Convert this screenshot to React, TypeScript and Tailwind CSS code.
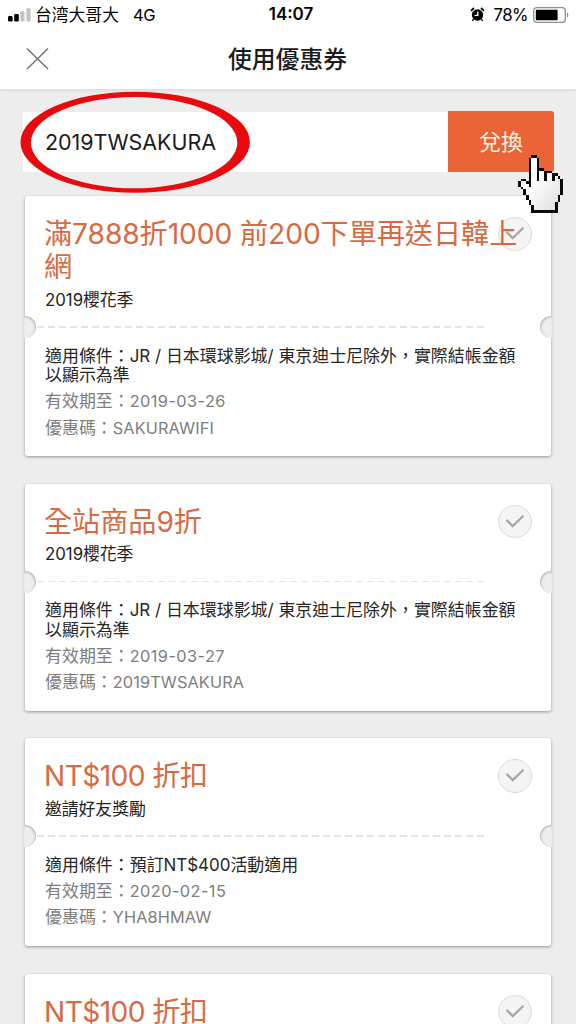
import { useState } from "react";
import clsx from "clsx";

interface Coupon {
  id: number;
  title: string[];
  campaign?: string;
  terms?: string[];
  expires?: string;
  code?: string;
}

const coupons: Coupon[] = [
  {
    id: 1,
    title: ["滿7888折1000 前200下單再送日韓上", "網"],
    campaign: "2019櫻花季",
    terms: ["適用條件：JR / 日本環球影城/ 東京迪士尼除外，實際結帳金額", "以顯示為準"],
    expires: "2019-03-26",
    code: "SAKURAWIFI",
  },
  {
    id: 2,
    title: ["全站商品9折"],
    campaign: "2019櫻花季",
    terms: ["適用條件：JR / 日本環球影城/ 東京迪士尼除外，實際結帳金額", "以顯示為準"],
    expires: "2019-03-27",
    code: "2019TWSAKURA",
  },
  {
    id: 3,
    title: ["NT$100 折扣"],
    campaign: "邀請好友獎勵",
    terms: ["適用條件：預訂NT$400活動適用"],
    expires: "2020-02-15",
    code: "YHA8HMAW",
  },
  // details not loaded yet
  { id: 4, title: ["NT$100 折扣"] },
];

// X = outline, o = fill
const HAND = [
  ".....XX..........",
  "....XooX.........",
  "....XooX.........",
  "....XooX.........",
  "....XooX.........",
  "....XooXXX.......",
  "....XooXooXXX....",
  "....XooXooXooXX..",
  "....XooXooXooXoX.",
  ".XX.XooXooXooXooX",
  "XooXXoooooooooooX",
  "XoooXoooooooooooX",
  ".XooooooooooooooX",
  "..XoooooooooooooX",
  "..XoooooooooooooX",
  "...XoooooooooooX.",
  "...XoooooooooooX.",
  "....XooooooooooX.",
  "....XoooooooooX..",
  ".....XooooooooX..",
  ".....XooooooooX..",
  ".....XXXXXXXXXX..",
];

const cells = (mark: string) =>
  HAND.map((row, y) =>
    row
      .split("")
      .map((c, x) => (c === mark ? `M${x} ${y}h1v1h-1z` : ""))
      .join("")
  ).join("");

// ── Pointer ──
const HandPointer = () => (
  <svg
    viewBox="0 0 17 22"
    preserveAspectRatio="none"
    shapeRendering="crispEdges"
    className="absolute left-[70px] top-[44px] z-20 h-[58px] w-[45px]"
  >
    <defs>
      <linearGradient id="hand" x1="0" y1="0" x2="1" y2="1">
        <stop offset="0.4" stopColor="#fff" />
        <stop offset="1" stopColor="#dcdcdc" />
      </linearGradient>
    </defs>
    <path d={cells("o")} fill="url(#hand)" />
    <path d={cells("X")} fill="#0b0b0b" />
  </svg>
);

// ── Status bar ──
const StatusBar = () => (
  <div className="grid h-7 grid-cols-3 items-center pl-2 pr-[7px] pt-px text-black">
    <div className="flex items-center">
      <svg width="23" height="14" viewBox="0 0 23 14">
        <rect x="0" y="8" width="4.6" height="5.5" rx="1.2" />
        <rect x="6.2" y="6" width="4.6" height="7.5" rx="1.2" />
        <rect x="12.3" y="3.2" width="4.2" height="10.3" rx="1" fill="#c4c4c4" />
        <rect x="18.4" y="0.3" width="4.2" height="13.2" rx="1" fill="#c4c4c4" />
      </svg>
      <span className="ml-[4px] mt-[2px] whitespace-nowrap text-[16.8px]">台湾大哥大</span>
      <span className="ml-[14px] mt-px text-[16.5px] tracking-[-0.3px]">4G</span>
    </div>
    <span className="pl-[5px] pt-px text-center text-[17px] font-semibold">14:07</span>
    <div className="flex items-center justify-end">
      <svg width="15" height="15" viewBox="0 0 15 15">
        <circle cx="7.5" cy="8" r="5.7" />
        <path d="M1 3.8 4 1M14 3.8 11 1" stroke="#000" strokeWidth="1.8" fill="none" />
        <path d="M3.6 12.2 2.4 13.8M11.4 12.2 12.6 13.8" stroke="#000" strokeWidth="1.4" />
        <path d="M7.8 4.5v3.8H4.6" stroke="#fff" strokeWidth="1.3" fill="none" />
      </svg>
      <span className="ml-[8px] mt-[2px] text-[16.8px] tracking-[-0.5px]">78%</span>
      <svg width="36" height="16" viewBox="0 0 36 16" className="ml-[5px]">
        <rect x="0.7" y="0.7" width="31.6" height="14.6" rx="3" fill="#fff" stroke="#8e8e8e" strokeWidth="1.3" />
        <rect x="2.8" y="2.8" width="21.8" height="10.4" rx="1" />
        <path d="M34 5.5c1.8.6 1.8 4.4 0 5z" fill="#8e8e8e" />
      </svg>
    </div>
  </div>
);

// ── Coupon card ──
const CouponCard = ({
  coupon,
  selected,
  onSelect,
}: {
  coupon: Coupon;
  selected: boolean;
  onSelect: () => void;
}) => (
  <article className="relative min-h-[208px] shrink-0 rounded-[3px] bg-white px-5 pb-[14.5px] pt-[22px] shadow-[0_1px_3px_rgba(0,0,0,0.38)]">
    <button
      onClick={onSelect}
      aria-label="選擇"
      className={clsx(
        "absolute right-[19.5px] top-[21px] flex size-[33.5px] items-center justify-center rounded-full border border-[#dadada]",
        selected ? "bg-[#eb6437] text-white" : "bg-[#f4f4f4] text-[#a8a8a8]"
      )}
    >
      <svg width="18" height="13" viewBox="0 0 18 13" fill="none" stroke="currentColor" strokeWidth="2.4">
        <path d="M1.2 5.6 6.7 11 16.8 1.5" strokeLinecap="round" />
      </svg>
    </button>

    <h2
      className={clsx(
        "relative -ml-px whitespace-nowrap text-[28.2px] font-normal leading-[33px] text-[#d86a42]",
        coupon.title[0].startsWith("NT$") ? "tracking-[-0.6px]" : "tracking-[-0.09px]"
      )}
    >
      {coupon.title.map((line) => (
        <span key={line} className="block">{line}</span>
      ))}
    </h2>

    {coupon.terms && (
      <>
        <p className="mt-[6.5px] text-[16.8px] leading-[19px] text-[#222]">{coupon.campaign}</p>

        {/* Perforation */}
        <div className="relative -mx-5 mt-[6.5px] flex h-[22px] items-center justify-between">
          <div className="-ml-px h-[22px] w-[12px] rounded-r-full bg-[#ededed] shadow-[inset_-1px_1px_2px_rgba(0,0,0,0.22)]" />
          <div className="mr-[53px] h-[1.5px] flex-1 bg-[repeating-linear-gradient(90deg,transparent_0px,transparent_1px,#e4e4e4_1px,#e4e4e4_8px,transparent_8px,transparent_11px)]" />
          <div className="-mr-px h-[22px] w-[12px] rounded-l-full bg-[#ededed] shadow-[inset_1px_1px_2px_rgba(0,0,0,0.22)]" />
        </div>

        <div className="mt-[8.5px] whitespace-nowrap text-[16.95px]">
          <p className="leading-[19.5px] text-[#262626]">
            {coupon.terms.map((line) => (
              <span key={line} className="block">{line}</span>
            ))}
          </p>
          <p className="mt-[2.5px] leading-[26.5px] text-[#7d7d7d]">
            有效期至：<span className="text-[16.3px] tracking-[0.45px]">{coupon.expires}</span>
          </p>
          <p className="mb-[0.5px] leading-[26.5px] text-[#7d7d7d]">
            優惠碼：<span className="text-[16.3px] tracking-[0.12px]">{coupon.code}</span>
          </p>
        </div>
      </>
    )}
  </article>
);

const App = () => {
  const [code, setCode] = useState("2019TWSAKURA");
  const [selectedId, setSelectedId] = useState<number | null>(null);

  return (
    <div className="flex h-[1024px] w-[576px] flex-col overflow-hidden bg-[#ededed] font-['Inter','Noto_Sans_CJK_TC',sans-serif]">
      <header className="relative z-10 h-[89px] shrink-0 bg-white shadow-[0_1px_4px_rgba(0,0,0,0.1)]">
        <StatusBar />
        <div className="grid h-[61px] grid-cols-[60px_1fr_60px] items-center">
          <button aria-label="關閉" className="pl-[26px]">
            <svg width="23" height="23" viewBox="0 0 23 23" stroke="#6a6a6a" strokeWidth="1.3">
              <path d="M1 1.5 22 22M22 1.5 1 22" />
            </svg>
          </button>
          <h1 className="pr-px pt-[2px] text-center text-[23.8px] font-medium text-[#1c1c1c]">使用優惠券</h1>
        </div>
      </header>

      <main className="flex flex-1 flex-col pt-[22px]">
        {/* Redeem code */}
        <div className="relative mx-[23px] mr-[22px] flex h-[61px] shrink-0">
          <input
            value={code}
            onChange={(e) => setCode(e.target.value)}
            className="mt-px min-w-0 flex-1 bg-white pl-[22px] text-[21.5px] tracking-[-0.05px] text-[#1c1c1c] outline-none"
          />
          <div className="relative w-[106px]">
            <button className="size-full rounded-r-[3px] bg-[#eb6437] pt-px text-[22px] text-[#fff3e2]">兌換</button>
            <HandPointer />
          </div>
          <svg
            width="230"
            height="102"
            viewBox="0 0 230 102"
            className="pointer-events-none absolute left-[-3px] top-[-20px] z-20"
          >
            <path
              fill="#e90a0e"
              fillRule="evenodd"
              d="M0.5 51.2a114.7 50.5 0 1 0 229.4 0a114.7 50.5 0 1 0-229.4 0zM10.9 51.7a103.2 45.6 0 1 0 206.4 0a103.2 45.6 0 1 0-206.4 0z"
            />
          </svg>
        </div>

        {/* Coupons */}
        <div className="ml-[25px] mr-[25px] mt-[24px] flex flex-col gap-[27.5px]">
          {coupons.map((coupon) => (
            <CouponCard
              key={coupon.id}
              coupon={coupon}
              selected={coupon.id === selectedId}
              onSelect={() => setSelectedId(coupon.id)}
            />
          ))}
        </div>
      </main>
    </div>
  );
};

export default App;
